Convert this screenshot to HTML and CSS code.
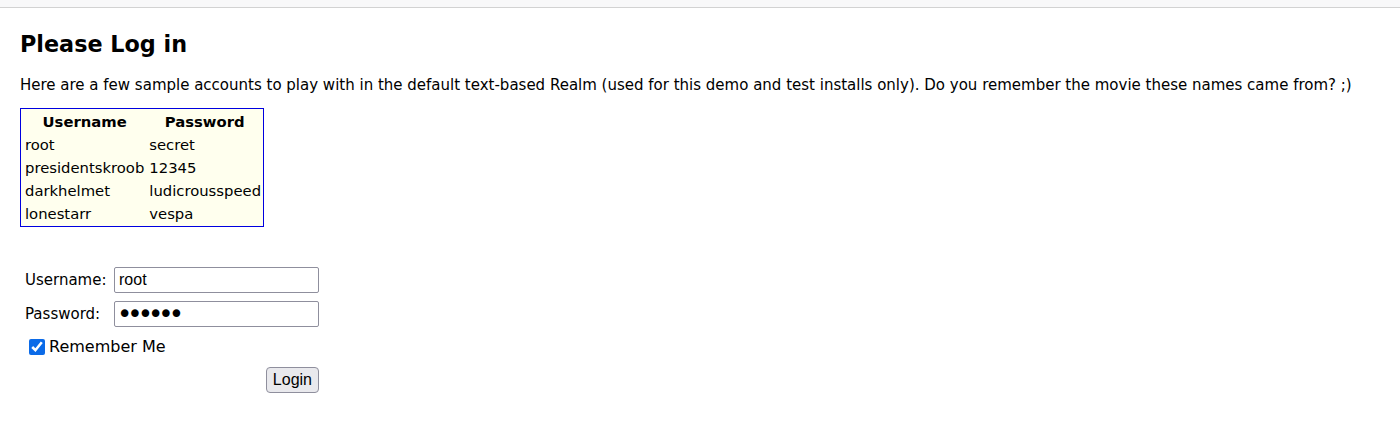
FILE: index.html
```html
<!DOCTYPE html>
<html>
<head>
<meta charset="utf-8">
<link rel="stylesheet" href="styles.css">
</head>
<body>
<div class="topbar"></div>
<div class="content">
  <h1 class="title">Please Log in</h1>
  <p class="intro">Here are a few sample accounts to play with in the default text-based Realm (used for this demo and test installs only). Do you remember the movie these names came from? ;)</p>
  <table class="accounts">
    <thead>
      <tr><th>Username</th><th>Password</th></tr>
    </thead>
    <tbody>
      <tr><td>root</td><td>secret</td></tr>
      <tr><td>presidentskroob</td><td>12345</td></tr>
      <tr><td>darkhelmet</td><td>ludicrousspeed</td></tr>
      <tr><td>lonestarr</td><td>vespa</td></tr>
    </tbody>
  </table>
  <form class="login">
    <div class="row">
      <label class="lbl" for="u">Username:</label>
      <input class="field" id="u" type="text" value="root">
    </div>
    <div class="row">
      <label class="lbl" for="p">Password:</label>
      <input class="field pw" id="p" type="password" value="secret">
    </div>
    <div class="row check">
      <input class="cb" id="r" type="checkbox" checked>
      <label for="r" class="remember">Remember Me</label>
    </div>
    <div class="row submit">
      <button type="button" class="btn">Login</button>
    </div>
  </form>
</div>
</body>
</html>
```
FILE: styles.css
```css
html, body {
  margin: 0;
  padding: 0;
  background: #ffffff;
}
body {
  font-family: "DejaVu Sans", Verdana, sans-serif;
  font-size: 15px;
  color: #000;
}
.topbar {
  height: 7px;
  background: #f8f8f9;
  border-bottom: 1px solid #d2d2d2;
}
.content {
  padding: 0 20px;
}
.title {
  font-size: 22.3px;
  font-weight: bold;
  margin: 22px 0 0 0;
  line-height: 28px;
}
.intro {
  margin: 18px 0 0 0;
  line-height: 18px;
}
.accounts {
  margin-top: 14px;
  border: 1px solid #0000e0;
  background: #ffffee;
  border-spacing: 2px;
  font-size: 14.8px;
}
.accounts th, .accounts td {
  padding: 1px 0 1px 2px;
  line-height: 19px;
}
.accounts td + td {
  padding-left: 3px;
}
.accounts th {
  text-align: center;
}
.accounts td {
  text-align: left;
}
.login {
  margin-top: 40px;
  width: 300px;
  display: flex;
  flex-direction: column;
}
.row {
  display: flex;
  align-items: center;
  margin-bottom: 8px;
}
.lbl {
  width: 89px;
  padding-left: 5px;
}
.field {
  width: 205px;
  height: 26px;
  box-sizing: border-box;
  border: 1px solid #8f8f9d;
  border-radius: 2px;
  font-family: "Liberation Sans", Arial, sans-serif;
  font-size: 16px;
  padding: 1px 4px;
  margin: 0;
}
.pw {
  font-family: "DejaVu Sans", sans-serif;
  font-size: 26px;
  letter-spacing: -5px;
  padding: 0 2px;
}
.check {
  padding-left: 9px;
  margin-top: 2px;
  margin-bottom: 11px;
}
.cb {
  width: 16px;
  height: 16px;
  margin: 0 4px 0 0;
  accent-color: #0b6be8;
}
.remember {
  font-size: 16px;
}
.submit {
  justify-content: flex-end;
  padding-right: 1px;
}
.btn {
  font-family: "Liberation Sans", Arial, sans-serif;
  font-size: 16px;
  height: 26px;
  padding: 1px 6px;
  border: 1px solid #8f8f9d;
  border-radius: 4px;
  background: #e9e9ed;
  color: #000;
}
```
